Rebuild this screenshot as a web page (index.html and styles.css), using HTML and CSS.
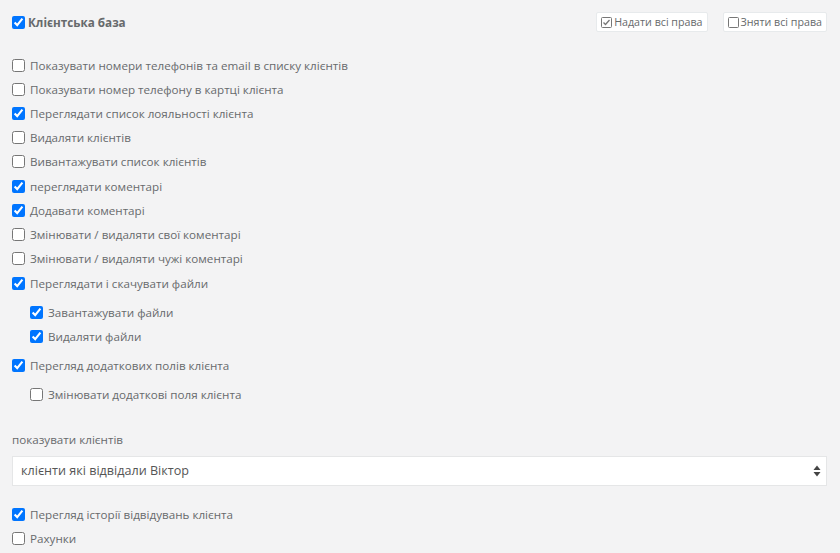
FILE: index.html
```html
<!DOCTYPE html>
<html lang="uk">
<head>
<meta charset="utf-8">
<link rel="stylesheet" href="styles.css">
</head>
<body>
<div class="page">
  <div class="header">
    <label class="row head"><input type="checkbox" checked><span>Клієнтська база</span></label>
    <div class="actions">
      <button class="btn"><svg width="11" height="11" viewBox="0 0 11 11"><rect x="0.5" y="0.5" width="10" height="10" rx="1" fill="none" stroke="#777" stroke-width="1"/><path d="M2.5 5.5 L4.5 7.5 L8.5 3" fill="none" stroke="#777" stroke-width="1.3"/></svg>Надати всі права</button>
      <button class="btn"><svg width="11" height="11" viewBox="0 0 11 11"><rect x="0.5" y="0.5" width="10" height="10" rx="1" fill="none" stroke="#777" stroke-width="1"/></svg>Зняти всі права</button>
    </div>
  </div>

  <div class="list">
    <label class="row"><input type="checkbox"><span>Показувати номери телефонів та email в списку клієнтів</span></label>
    <label class="row"><input type="checkbox"><span>Показувати номер телефону в картці клієнта</span></label>
    <label class="row"><input type="checkbox" checked><span>Переглядати список лояльності клієнта</span></label>
    <label class="row"><input type="checkbox"><span>Видаляти клієнтів</span></label>
    <label class="row"><input type="checkbox"><span>Вивантажувати список клієнтів</span></label>
    <label class="row"><input type="checkbox" checked><span>переглядати коментарі</span></label>
    <label class="row"><input type="checkbox" checked><span>Додавати коментарі</span></label>
    <label class="row"><input type="checkbox"><span>Змінювати / видаляти свої коментарі</span></label>
    <label class="row"><input type="checkbox"><span>Змінювати / видаляти чужі коментарі</span></label>
    <label class="row"><input type="checkbox" checked><span>Переглядати і скачувати файли</span></label>
  </div>
  <div class="sub">
    <label class="row"><input type="checkbox" checked><span>Завантажувати файли</span></label>
    <label class="row"><input type="checkbox" checked><span>Видаляти файли</span></label>
  </div>
  <label class="row solo"><input type="checkbox" checked><span>Перегляд додаткових полів клієнта</span></label>
  <div class="sub sub2">
    <label class="row"><input type="checkbox"><span>Змінювати додаткові поля клієнта</span></label>
  </div>

  <div class="field">
    <div class="field-label">показувати клієнтів</div>
    <div class="select">
      <span>клієнти які відвідали Віктор</span>
      <svg width="8" height="12" viewBox="0 0 8 12"><path d="M4 0.5 L7.5 5 L0.5 5 Z" fill="#444"/><path d="M4 11.5 L7.5 7 L0.5 7 Z" fill="#444"/></svg>
    </div>
  </div>

  <div class="list bottom">
    <label class="row"><input type="checkbox" checked><span>Перегляд історії відвідувань клієнта</span></label>
    <label class="row"><input type="checkbox"><span>Рахунки</span></label>
  </div>
</div>
</body>
</html>
```

FILE: styles.css
```css
* { box-sizing: border-box; }
html, body { margin: 0; padding: 0; }
body {
  background: #f3f3f4;
  font-family: "Open Sans", "Liberation Sans", sans-serif;
  font-size: 11.65px;
  color: #676a6c;
}
.page {
  padding: 10px 13px 0 12px;
}
.header {
  display: flex;
  justify-content: space-between;
  align-items: center;
  height: 24px;
  margin-bottom: 19px;
}
.row {
  display: flex;
  align-items: center;
  height: 24.22px;
  cursor: pointer;
}
.row input {
  width: 13px;
  height: 13px;
  margin: 0 5px 0 0;
  flex: none;
}
.head span {
  font-weight: 700;
  font-size: 11.7px;
  color: #676a6c;
}
.head input { margin-right: 3px; }
.actions {
  display: flex;
  gap: 15px;
}
.btn {
  display: flex;
  align-items: center;
  gap: 2px;
  height: 20px;
  padding: 0 4px;
  background: #fff;
  border: 1px solid #e7eaec;
  border-radius: 2px;
  font-family: "Open Sans", "Liberation Sans", sans-serif;
  font-size: 10.7px;
  color: #676a6c;
}
.sub {
  padding-left: 18px;
  margin-top: 5px;
  margin-bottom: 4px;
}
.sub .row { height: 24.5px; }
.sub2 { margin-bottom: 0; }
.field {
  margin-top: 24px;
}
.field-label {
  line-height: 18px;
  margin-bottom: 7px;
}
.select {
  display: flex;
  justify-content: space-between;
  align-items: center;
  height: 30px;
  padding: 0 5px 0 8px;
  background: #fff;
  border: 1px solid #e5e6e7;
  font-size: 12.6px;
  color: #555;
}
.bottom {
  margin-top: 16px;
}
```
